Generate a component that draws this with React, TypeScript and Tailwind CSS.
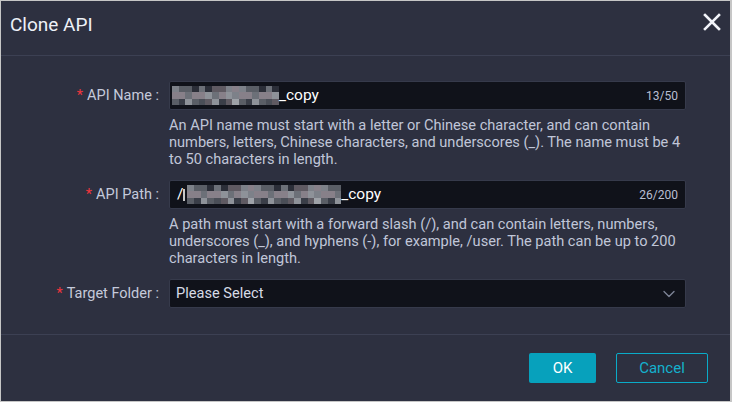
import { ChevronDown } from 'lucide-react'

const greys = ['#2b2e38', '#3a3e48', '#4a4e57', '#5a5e66', '#6c7078', '#7d8189', '#8e9299', '#9ea2a8', '#5f5a62', '#878089']

function Pixels({ cols, seed }: { cols: number; seed: number }) {
  const rows = [0, 1, 2]
  return (
    <div className="flex flex-col">
      {rows.map((r) => (
        <div key={r} className="flex">
          {Array.from({ length: cols }).map((_, c) => {
            const v = (c * 7 + r * 13 + seed * 5 + ((c * c + r) % 5)) % greys.length
            const mid = r === 1 ? Math.min(v + 2, greys.length - 1) : v
            return <div key={c} className="h-[6.5px] w-[6.7px]" style={{ backgroundColor: greys[mid] }} />
          })}
        </div>
      ))}
    </div>
  )
}

function Label({ text }: { text: string }) {
  return (
    <div className="flex h-[29px] items-center justify-end pr-[10px] text-[14.5px] text-[#c5cadb]">
      <span className="mr-[4px] text-[#f0353d]">*</span>
      {text} :
    </div>
  )
}

function Help({ children }: { children: React.ReactNode }) {
  return <p className="mt-[7px] w-[520px] text-[14.6px] leading-[17px] text-[#c0c6d8]">{children}</p>
}

export default function App() {
  return (
    <div className="flex h-[402px] w-[732px] flex-col border border-r-2 border-[#c6c6c6] bg-[#2d3040] font-['Roboto',sans-serif]">
      <div className="flex h-[55px] shrink-0 items-start justify-between border-b border-[#3c4053] pl-[9px] pr-[9px] pt-[11px]">
        <h1 className="text-[19px] leading-[26px] text-[#eef1f7]">Clone API</h1>
        <svg width="18" height="18" viewBox="0 0 18 18" className="mt-[1px]">
          <path d="M2 2 L16 16 M16 2 L2 16" stroke="#f2f4fa" strokeWidth="2.6" strokeLinecap="square" />
        </svg>
      </div>

      <div className="grid grid-cols-[168px_517px] pt-[25px]">
        <Label text="API Name" />
        <div>
          <div className="flex h-[29px] items-center rounded-[2px] border border-[#363a4b] bg-[#10121a] pl-[2px] pr-[7px]">
            <Pixels cols={16} seed={1} />
            <span className="text-[15.5px] text-white">_copy</span>
            <span className="ml-auto text-[12px] text-[#b9bfd2]">13/50</span>
          </div>
          <Help>
            An API name must start with a letter or Chinese character, and can contain numbers, letters, Chinese characters, and underscores (_). The name must be 4 to 50 characters in length.
          </Help>
        </div>

        <div className="col-span-2 h-[12px]" />

        <Label text="API Path" />
        <div>
          <div className="flex h-[29px] items-center rounded-[2px] border border-[#363a4b] bg-[#10121a] pl-[7px] pr-[7px]">
            <span className="text-[15.5px] text-white">/</span>
            <span className="mr-[2px] h-[12px] w-[2px] bg-[#c8c8c8]" />
            <Pixels cols={23} seed={3} />
            <span className="text-[15.5px] text-white">_copy</span>
            <span className="ml-auto text-[12px] text-[#b9bfd2]">26/200</span>
          </div>
          <Help>
            A path must start with a forward slash (/), and can contain letters, numbers, underscores (_), and hyphens (-), for example, /user. The path can be up to 200 characters in length.
          </Help>
        </div>

        <div className="col-span-2 h-[12px]" />

        <Label text="Target Folder" />
        <div className="flex h-[29px] items-center justify-between rounded-[2px] border border-[#363a4b] bg-[#10121a] pl-[6px] pr-[6px]">
          <span className="text-[14.6px] text-[#d7dbe6]">Please Select</span>
          <ChevronDown size={20} strokeWidth={1.6} className="text-[#7d8396]" />
        </div>
      </div>

      <div className="mt-auto flex h-[67px] items-center justify-end gap-[20px] border-t border-[#3c4053] pr-[22px]">
        <button className="h-[30px] w-[67px] rounded-[2px] bg-[#07a1bc] text-[15px] text-white">OK</button>
        <button className="h-[30px] w-[92px] rounded-[2px] border border-[#0aabc8] text-[15px] text-[#14b1cd]">Cancel</button>
      </div>
    </div>
  )
}
